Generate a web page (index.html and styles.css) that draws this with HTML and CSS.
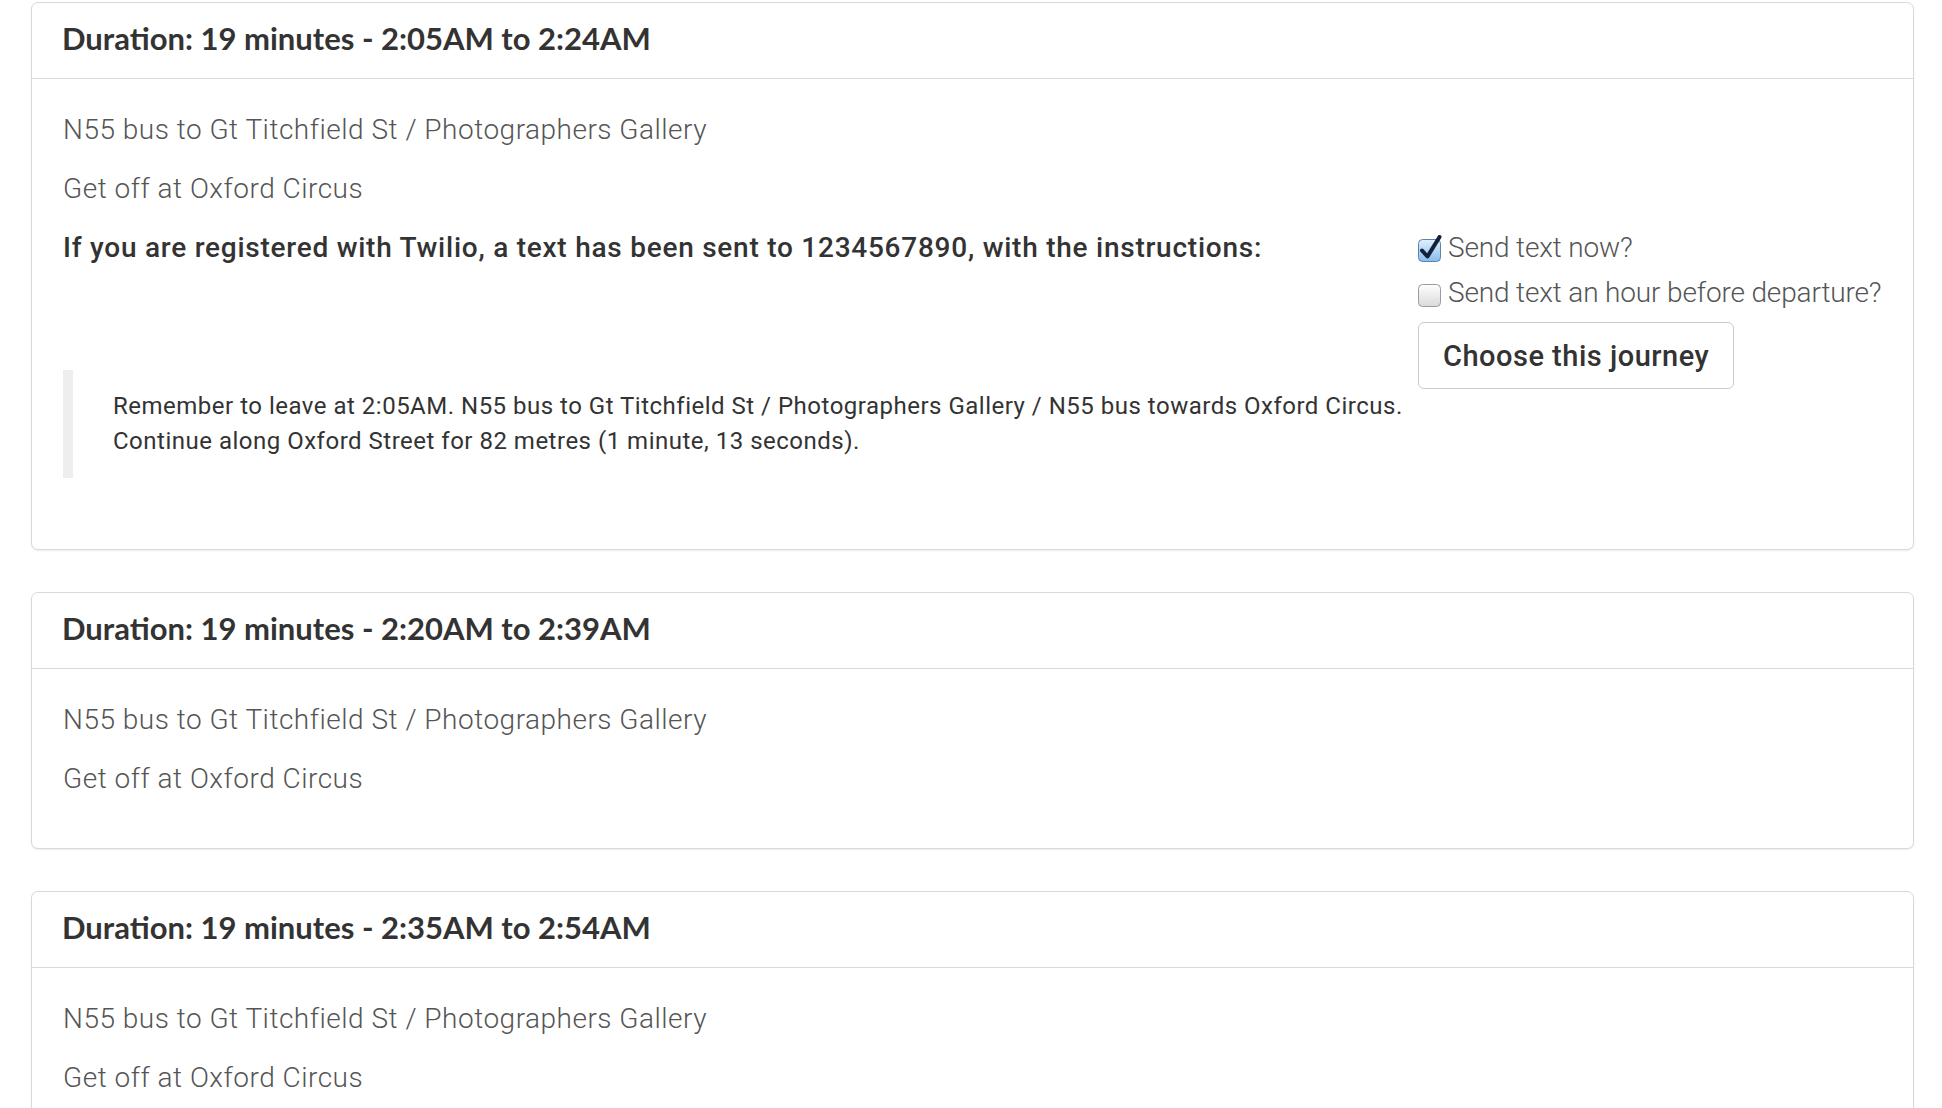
FILE: index.html
```html
<!DOCTYPE html>
<html lang="en">
<head>
<meta charset="utf-8">
<title>Journeys</title>
<link rel="stylesheet" href="styles.css">
</head>
<body>
<div class="page">
  <section class="panel">
    <div class="panel-heading"><h3>Duration: 19 minutes - 2:05AM to 2:24AM</h3></div>
    <div class="panel-body">
      <p class="leg">N55 bus to Gt Titchfield St / Photographers Gallery</p>
      <p class="leg">Get off at Oxford Circus</p>
      <div class="sms-row">
        <div class="sms-main">
          <p class="sms-note">If you are registered with Twilio, a text has been sent to 1234567890, with the instructions:</p>
          <blockquote class="sms-text">Remember to leave at 2:05AM. N55 bus to Gt Titchfield St / Photographers Gallery / N55 bus towards Oxford Circus. Continue along Oxford Street for 82 metres (1 minute, 13 seconds).</blockquote>
        </div>
        <form class="sms-options">
          <label class="opt">
            <svg class="cb" viewBox="0 0 25 28" width="25" height="28" aria-hidden="true">
              <defs>
                <linearGradient id="cbOn" x1="0" y1="0" x2="0" y2="1">
                  <stop offset="0" stop-color="#e2f0fd"/>
                  <stop offset="1" stop-color="#86bcef"/>
                </linearGradient>
              </defs>
              <rect x="0.5" y="4.5" width="22" height="22" rx="4" fill="url(#cbOn)" stroke="#5f82aa"/>
              <path d="M4 15.5 L9.5 21.5 L21.5 2" fill="none" stroke="#13223a" stroke-width="4" stroke-linecap="round" stroke-linejoin="round"/>
            </svg>
            <span>Send text now?</span>
          </label>
          <label class="opt">
            <svg class="cb" viewBox="0 0 25 28" width="25" height="28" aria-hidden="true">
              <defs>
                <linearGradient id="cbOff" x1="0" y1="0" x2="0" y2="1">
                  <stop offset="0" stop-color="#fefefe"/>
                  <stop offset="1" stop-color="#dadada"/>
                </linearGradient>
              </defs>
              <rect x="0.5" y="4.5" width="22" height="22" rx="4" fill="url(#cbOff)" stroke="#9c9c9c"/>
            </svg>
            <span>Send text an hour before departure?</span>
          </label>
          <button type="button" class="btn">Choose this journey</button>
        </form>
      </div>
    </div>
  </section>

  <section class="panel">
    <div class="panel-heading"><h3>Duration: 19 minutes - 2:20AM to 2:39AM</h3></div>
    <div class="panel-body">
      <p class="leg">N55 bus to Gt Titchfield St / Photographers Gallery</p>
      <p class="leg">Get off at Oxford Circus</p>
    </div>
  </section>

  <section class="panel">
    <div class="panel-heading"><h3>Duration: 19 minutes - 2:35AM to 2:54AM</h3></div>
    <div class="panel-body">
      <p class="leg">N55 bus to Gt Titchfield St / Photographers Gallery</p>
      <p class="leg">Get off at Oxford Circus</p>
    </div>
  </section>
</div>
</body>
</html>
```

FILE: styles.css
```css
html, body {
  margin: 0;
  background: #fff;
}

.page {
  padding: 2px 28px 0 31px;
}

.panel {
  background: #fff;
  border: 1px solid #d9d9d9;
  border-radius: 7px;
  box-shadow: 0 1px 2px rgba(0, 0, 0, 0.08);
  margin-bottom: 42px;
}

.panel-heading {
  padding: 16px 30px 21px;
  border-bottom: 1px solid #d9d9d9;
}

.panel-heading h3 {
  margin: 0;
  font-family: Lato, "Noto Sans", sans-serif;
  font-weight: 700;
  font-size: 31px;
  line-height: 38px;
  color: #333;
}

.panel-body {
  padding: 31px 31px 30px;
}

.leg {
  margin: 0 0 19px;
  font-family: Roboto, "Noto Sans", sans-serif;
  font-weight: 300;
  font-size: 28px;
  line-height: 40px;
  letter-spacing: 0.5px;
  color: #555;
}

.sms-row {
  display: flex;
}

.sms-main {
  flex: 1;
  min-width: 0;
}

.sms-note {
  margin: 0;
  font-family: Roboto, "Noto Sans", sans-serif;
  font-weight: 500;
  font-size: 28px;
  line-height: 40px;
  letter-spacing: 0.75px;
  color: #333;
}

.sms-text {
  margin: 102px 0 41px;
  padding: 19px 0 19px 40px;
  border-left: 10px solid #eee;
  font-family: Roboto, "Noto Sans", sans-serif;
  font-weight: 400;
  font-size: 24px;
  line-height: 35px;
  letter-spacing: 0.5px;
  color: #333;
}

.sms-options {
  flex: none;
  width: 464px;
  display: flex;
  flex-direction: column;
  align-items: flex-start;
}

.opt {
  display: flex;
  align-items: center;
  gap: 5px;
  margin-bottom: 5px;
  white-space: nowrap;
  font-family: Roboto, "Noto Sans", sans-serif;
  font-weight: 300;
  font-size: 28px;
  line-height: 40px;
  letter-spacing: -0.15px;
  color: #555;
}

.cb {
  flex: none;
  margin-top: 1px;
}

.btn {
  margin-top: 4px;
  padding: 13px 24px 12px;
  border: 1px solid #ccc;
  border-radius: 6px;
  background: #fff;
  font-family: Roboto, "Noto Sans", sans-serif;
  font-weight: 500;
  font-size: 29px;
  line-height: 40px;
  letter-spacing: 0.5px;
  color: #333;
}
```
